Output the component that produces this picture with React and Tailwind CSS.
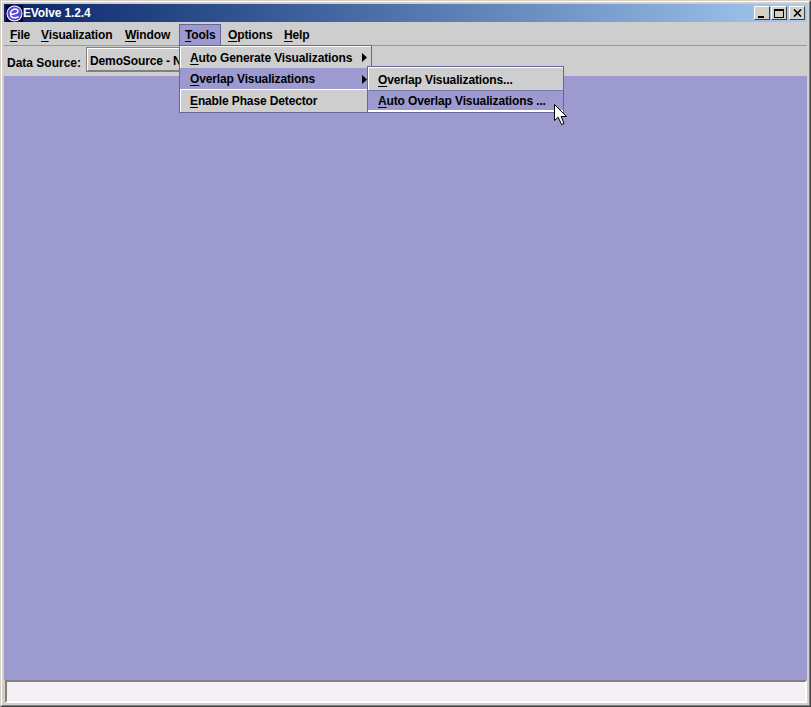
import React from "react";

const UNDER = "underline decoration-1 underline-offset-2";

function MenuLabel({ first, rest }) {
  return (
    <span>
      <span className={UNDER}>{first}</span>
      {rest}
    </span>
  );
}

function Arrow({ className }) {
  return (
    <svg width="5" height="9" viewBox="0 0 5 9" className={`absolute right-[4px] ${className}`}>
      <path d="M0 0 L5 4.5 L0 9 Z" fill="#000" />
    </svg>
  );
}

function EvolveLogo() {
  return (
    <svg width="17" height="17" viewBox="0 0 17 17" className="shrink-0">
      <rect width="17" height="17" fill="#04042a" />
      <circle cx="8.5" cy="8.5" r="8" fill="#fff" />
      <circle cx="8.5" cy="8.5" r="7" fill="#5b48d8" />
      <path d="M4.5 9 C7.5 9.5 12 8.5 12 6.2 C12 4.2 9 3.6 7 4.6 C4.5 5.9 3.7 9 5.1 11.2 C6.5 13.2 10 13.4 12.5 11.6" fill="none" stroke="#fff" strokeWidth="1.5" />
    </svg>
  );
}

function WinButton({ children }) {
  return (
    <div className="w-4 h-[14px] bg-[#d4d0c8] border border-t-white border-l-white border-r-[#404040] border-b-[#404040] flex items-center justify-center">
      {children}
    </div>
  );
}

function Item({ first, rest, active, children, className }) {
  return (
    <div className={`relative pl-[9px] whitespace-nowrap ${active ? "bg-[#9c9acf] ml-[-1px] pl-[10px]" : "bg-[#cecece]"} ${className || ""}`}>
      <MenuLabel first={first} rest={rest} />
      {children}
    </div>
  );
}

export default function App() {
  return (
    <div className="relative w-[811px] h-[707px] border border-t-[#d4d0c8] border-l-[#d4d0c8] border-r-[#404040] border-b-[#404040] font-['Liberation_Sans',Arial,sans-serif] text-[12px] font-bold tracking-[-0.13px] text-[#000] overflow-hidden">
      <div className="w-full h-full border border-t-white border-l-white border-r-[#808080] border-b-[#808080] bg-[#d4d0c8] p-[2px] flex flex-col">
        {/* Title bar */}
        <div className="h-[18px] shrink-0 flex items-center pl-[2px] pr-[2px] bg-gradient-to-r from-[#0a246a] to-[#a6caf0]">
          <EvolveLogo />
          <span className="text-white text-[12px]">EVolve 1.2.4</span>
          <div className="ml-auto flex">
            <WinButton>
              <div className="w-[6px] h-[2px] bg-black mt-[7px] -ml-[2px]" />
            </WinButton>
            <div className="ml-[1px]">
              <WinButton>
                <div className="w-[10px] h-[9px] border border-black border-t-2" />
              </WinButton>
            </div>
            <div className="ml-[2px]">
              <WinButton>
                <svg width="9" height="8" viewBox="0 0 9 8">
                  <path d="M1 0.5 L8 7.5 M8 0.5 L1 7.5" stroke="#000" strokeWidth="1.6" />
                </svg>
              </WinButton>
            </div>
          </div>
        </div>

        {/* Menu bar */}
        <div className="h-[24px] shrink-0 bg-[#cecece] border-b border-[#999] flex items-start pt-[2px]">
          <div className="h-[21px] w-[31px] pl-[6px] leading-[23px]"><MenuLabel first="F" rest="ile" /></div>
          <div className="h-[21px] w-[84px] pl-[6px] leading-[23px]"><MenuLabel first="V" rest="isualization" /></div>
          <div className="h-[21px] w-[60px] pl-[6px] leading-[23px]"><MenuLabel first="W" rest="indow" /></div>
          <div className="h-[22px] w-[42px] pl-[5px] leading-[21px] bg-[#9c9acf] border border-[#666699] border-b-0"><MenuLabel first="T" rest="ools" /></div>
          <div className="h-[21px] w-[56px] pl-[7px] leading-[23px]"><MenuLabel first="O" rest="ptions" /></div>
          <div className="h-[21px] pl-[7px] leading-[23px]"><MenuLabel first="H" rest="elp" /></div>
        </div>

        {/* Toolbar */}
        <div className="h-[30px] shrink-0 bg-[#cecece] flex items-center pl-[3px] tracking-normal">
          <span className="mt-[4px]">Data Source:</span>
          <div className="ml-[5px] w-[240px] h-[25px] mb-[3px] border border-[#808080] bg-[#cecece] overflow-hidden whitespace-nowrap tracking-[-0.13px]">
            <div className="h-full border border-white border-r-[#808080] border-b-[#808080] pl-[2px] leading-[24px]">
              DemoSource - N
            </div>
          </div>
        </div>

        {/* Desktop */}
        <div className="flex-1 bg-[#9c9acf]" />

        {/* Status bar */}
        <div className="h-[23px] shrink-0 pl-[1px] bg-[#d4d0c8]">
          <div className="h-full border-2 border-t-[#808080] border-l-[#808080] border-r-white border-b-white bg-[#f5f0f5]" />
        </div>
      </div>

      {/* Tools menu */}
      <div className="absolute left-[178px] top-[44px] w-[193px] border border-[#666699] bg-[#cecece]">
        <div className="border-t border-l border-white">
          <Item first="A" rest="uto Generate Visualizations" className="h-[21px] leading-[23px]">
            <Arrow className="top-[6px]" />
          </Item>
          <Item first="O" rest="verlap Visualizations" active className="h-[21px] leading-[23px]">
            <Arrow className="top-[7px]" />
          </Item>
          <Item first="E" rest="nable Phase Detector" className="h-[23px] leading-[23px] border-t border-white" />
        </div>
      </div>

      {/* Overlap submenu */}
      <div className="absolute left-[366px] top-[65px] w-[197px] border border-[#666699] bg-[#cecece]">
        <div className="border-t border-l border-white">
          <Item first="O" rest="verlap Visualizations..." className="h-[22px] leading-[24px]" />
          <Item first="A" rest="uto Overlap Visualizations ..." active className="h-[20px] leading-[21px] border-t border-[#7c7aaf]" />
          <div className="h-[2px] ml-[-1px] bg-white" />
        </div>
      </div>

      {/* Mouse cursor */}
      <svg width="15" height="23" viewBox="0 0 15 23" className="absolute left-[553px] top-[103px]">
        <path d="M0.5 0.5 L0.5 16.5 L4.2 13.2 L7.5 20.5 L10 19.5 L7.2 12.5 L12.5 12.5 Z" fill="#fff" stroke="#000" strokeWidth="1" />
      </svg>
    </div>
  );
}
